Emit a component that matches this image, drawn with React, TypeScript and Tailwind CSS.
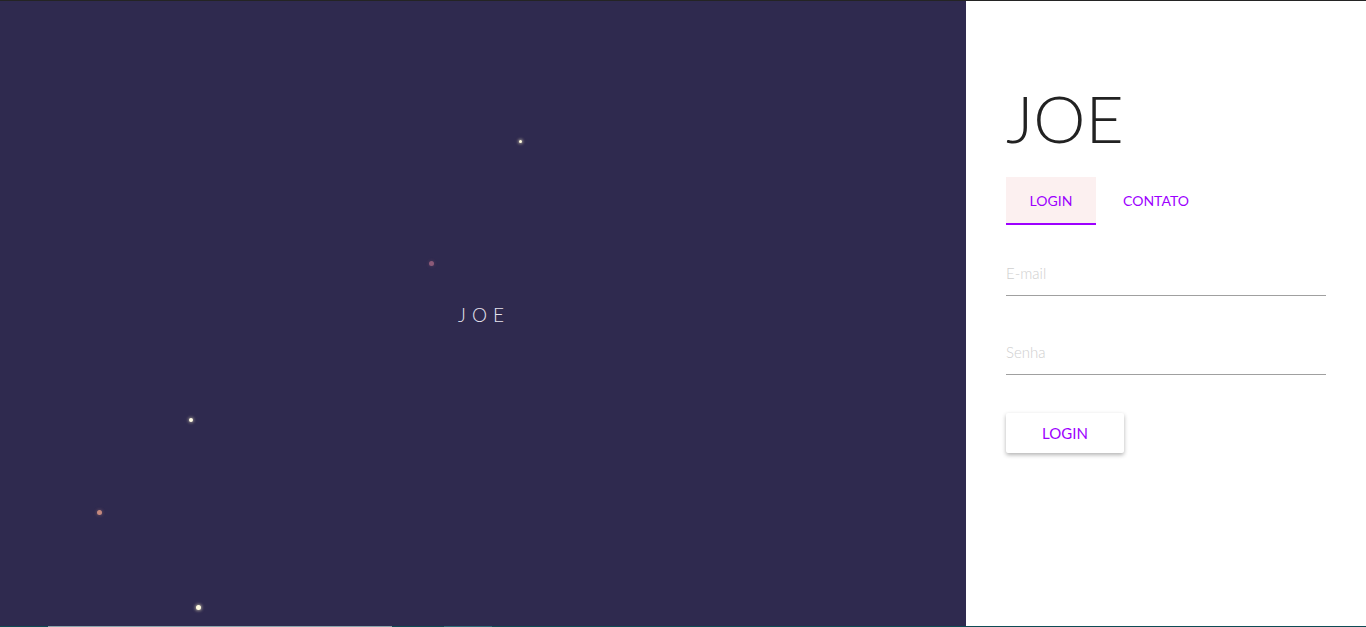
import React from 'react';

interface Star {
    x: number;
    y: number;
    size: number;
    color: string;
    glow: string;
}

const stars: Star[] = [
    { x: 520, y: 141, size: 3, color: '#fffbe0', glow: 'rgba(255,245,200,0.5)' },
    { x: 431, y: 263, size: 5, color: '#8c5a78', glow: 'rgba(140,90,120,0.2)' },
    { x: 191, y: 420, size: 4, color: '#fffbe6', glow: 'rgba(255,245,200,0.4)' },
    { x: 99, y: 512, size: 5, color: '#c4897e', glow: 'rgba(196,137,126,0.25)' },
    { x: 198, y: 607, size: 5, color: '#fffbe0', glow: 'rgba(255,245,200,0.5)' },
];

const App: React.FC = () => {
    return (
        <div
            className="w-[1366px] h-[627px] flex flex-col bg-white overflow-hidden"
            style={{ fontFamily: 'Lato, "Open Sans", sans-serif' }}
        >
            <div className="h-px bg-[#242424] w-full" />
            <div className="flex flex-1">
                {/* left night sky */}
                <div className="relative w-[966px] bg-[#2f2a4f] flex items-center justify-center">
                    {stars.map((s, i) => (
                        <span
                            key={i}
                            className="absolute rounded-full"
                            style={{
                                left: s.x - s.size / 2,
                                top: s.y - 1 - s.size / 2,
                                width: s.size,
                                height: s.size,
                                background: s.color,
                                boxShadow: `0 0 3px 1px ${s.glow}`,
                            }}
                        />
                    ))}
                    <p className="text-[#e6e3ee] text-[19px] font-light tracking-[6px] pl-[6px] mt-[4px] mr-[4px]">
                        JOE
                    </p>
                </div>

                {/* right form */}
                <div className="flex-1 px-10 pt-[77px]">
                    <h1 className="text-[#222] text-[66px] leading-[80px] font-light">
                        JOE
                    </h1>
                    <div className="flex mt-[19px]">
                        <button className="w-[90px] h-[48px] bg-[#fcf0f0] border-b-2 border-[#9d00ff] text-[#9d00ff] text-[14px]">
                            LOGIN
                        </button>
                        <button className="w-[120px] h-[48px] text-[#9d00ff] text-[14px] pb-[2px]">
                            CONTATO
                        </button>
                    </div>
                    <div className="w-[320px] mt-[33px]">
                        <input
                            placeholder="E-mail"
                            className="w-full h-[38px] pb-[8px] border-b border-[#a0a0a0] text-[15px] font-light outline-none placeholder:text-[#cfcfcf]"
                        />
                        <input
                            placeholder="Senha"
                            className="w-full h-[38px] pb-[8px] mt-[41px] border-b border-[#a0a0a0] text-[15px] font-light outline-none placeholder:text-[#cfcfcf]"
                        />
                    </div>
                    <button className="mt-[38px] w-[118px] h-[40px] rounded-[2px] bg-white text-[#9d00ff] text-[15px] shadow-[0_2px_4px_rgba(0,0,0,0.3)]">
                        LOGIN
                    </button>
                </div>
            </div>
            <div className="h-px w-full bg-[#0e4b55] flex">
                <div className="ml-[48px] w-[344px] bg-[#8aa4ab]" />
                <div className="ml-[52px] w-[48px] bg-[#2c6d78]" />
            </div>
        </div>
    );
};

export default App;
